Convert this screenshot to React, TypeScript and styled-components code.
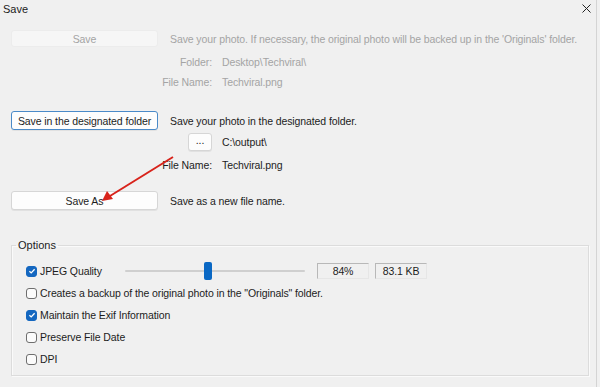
import React from 'react';
import styled, { createGlobalStyle } from 'styled-components';

const GlobalStyle = createGlobalStyle`
  html, body {
    margin: 0;
    padding: 0;
    background: #f0f0f0;
  }
  body {
    font-family: 'Liberation Sans', Arial, sans-serif;
    font-size: 10.5px;
    letter-spacing: -0.1px;
    color: #1c1c1c;
  }
`;

const Window = styled.div`
  position: relative;
  width: 597px;
  height: 387px;
  background: #f0f0f0;
  border-right: 1px solid #d4d4d4;
  box-sizing: border-box;
  overflow: hidden;
`;

const TitleBar = styled.div`
  height: 18px;
  display: flex;
  align-items: center;
  justify-content: space-between;
  padding: 0 5px 0 3px;
  font-size: 11px;
  letter-spacing: 0;
`;

const CloseIcon = styled.svg`
  width: 9px;
  height: 9px;
  margin-top: -1px;
`;

const Content = styled.div`
  padding: 0 8px 0 11px;
`;

const ActionRow = styled.div<{ $top: number }>`
  display: grid;
  grid-template-columns: 147px 1fr;
  column-gap: 12px;
  align-items: center;
  margin-top: ${({ $top }) => $top}px;
`;

const DetailRow = styled.div<{ $top: number; $h: number }>`
  display: grid;
  grid-template-columns: 201px auto;
  column-gap: 10px;
  align-items: center;
  height: ${({ $h }) => $h}px;
  margin-top: ${({ $top }) => $top}px;
  color: ${({ color }) => color || '#1c1c1c'};
`;

const DetailLabel = styled.span`
  justify-self: end;
  white-space: nowrap;
`;

const PushButton = styled.button<{ $variant?: 'disabled' | 'focus' | 'normal' }>`
  height: ${({ $variant }) => ($variant === 'disabled' ? 17 : 19)}px;
  margin: 0;
  padding: 0;
  font-family: inherit;
  font-size: 10.5px;
  letter-spacing: inherit;
  border-radius: 3px;
  text-align: center;
  color: ${({ $variant }) => ($variant === 'disabled' ? '#a4a4a4' : '#1c1c1c')};
  background: ${({ $variant }) => ($variant === 'disabled' ? '#f6f6f6' : '#fdfdfd')};
  border: 1px solid
    ${({ $variant }) =>
      $variant === 'focus' ? '#4a8ac8' : $variant === 'disabled' ? '#ececec' : '#d6d6d6'};
  box-shadow: ${({ $variant }) =>
    $variant === 'disabled' ? 'none' : '0 1px 0 rgba(0,0,0,0.06)'};
`;

const SmallButton = styled(PushButton)`
  width: 24px;
  height: 18px;
  justify-self: end;
  line-height: 10px;
  padding-bottom: 4px;
`;

const Hint = styled.span<{ $muted?: boolean }>`
  color: ${({ $muted }) => ($muted ? '#a4a4a4' : '#1c1c1c')};
  white-space: nowrap;
`;

const Options = styled.fieldset`
  margin: 29px 0 0 0;
  padding: 9px 6px 5px 14px;
  width: 578px;
  height: 137px;
  box-sizing: border-box;
  border: 1px solid #dcdcdc;
  box-shadow: inset 1px 1px 0 #fafafa, 1px 1px 0 #fafafa;
`;

const Legend = styled.legend`
  padding: 0 2px;
  margin-left: -10px;
  font-size: 11px;
  letter-spacing: 0;
  color: #1c1c1c;
`;

const OptionRow = styled.div`
  display: flex;
  align-items: center;
  height: 22px;
`;

const CheckLabel = styled.label<{ $width?: number }>`
  display: flex;
  align-items: center;
  gap: 3px;
  white-space: nowrap;
  width: ${({ $width }) => ($width ? `${$width}px` : 'auto')};
`;

const Box = styled.span<{ $checked: boolean }>`
  width: 11px;
  height: 11px;
  box-sizing: border-box;
  border-radius: 3px;
  display: inline-flex;
  align-items: center;
  justify-content: center;
  background: ${({ $checked }) => ($checked ? '#1467c0' : '#fbfbfb')};
  border: 1px solid ${({ $checked }) => ($checked ? '#1467c0' : '#6e6e6e')};
`;

const SliderTrack = styled.div`
  position: relative;
  width: 180px;
  height: 2px;
  background: #cfcfcf;
  border-radius: 1px;
  margin-right: 12px;
`;

const SliderThumb = styled.div`
  position: absolute;
  top: -8px;
  width: 8px;
  height: 18px;
  border-radius: 2px;
  background: #0a68c4;
  transform: translateX(-50%);
`;

const ValueBox = styled.div`
  width: 52px;
  height: 16px;
  box-sizing: border-box;
  display: flex;
  align-items: center;
  justify-content: center;
  border: 1px solid #b8b8b8;
  border-right-color: #e6e6e6;
  border-bottom-color: #e6e6e6;
  background: #f0f0f0;
  margin-right: 6px;
  font-size: 10.5px;
`;

const Arrow = styled.svg`
  position: absolute;
  left: 0;
  top: 0;
  width: 600px;
  height: 387px;
  pointer-events: none;
`;

const Check = ({ checked, label, width }: { checked: boolean; label: string; width?: number }) => (
  <CheckLabel $width={width}>
    <Box $checked={checked}>
      {checked && (
        <svg width="8" height="8" viewBox="0 0 8 8">
          <path d="M1.4 4.2 L3.2 5.9 L6.6 2.2" fill="none" stroke="#fff" strokeWidth="1.3" />
        </svg>
      )}
    </Box>
    {label}
  </CheckLabel>
);

const quality = 46;

const App = () => (
  <>
    <GlobalStyle />
    <Window>
      <TitleBar>
        <span>Save</span>
        <CloseIcon viewBox="0 0 9 9">
          <path d="M0.5 0.5 L8.5 8.5 M8.5 0.5 L0.5 8.5" stroke="#222" strokeWidth="1" />
        </CloseIcon>
      </TitleBar>
      <Content>
        <ActionRow $top={12}>
          <PushButton $variant="disabled">Save</PushButton>
          <Hint $muted>
            Save your photo. If necessary, the original photo will be backed up in the 'Originals' folder.
          </Hint>
        </ActionRow>
        <DetailRow $top={5} $h={20} color="#a4a4a4">
          <DetailLabel>Folder:</DetailLabel>
          <span>Desktop\Techviral\</span>
        </DetailRow>
        <DetailRow $top={0} $h={20} color="#a4a4a4">
          <DetailLabel>File Name:</DetailLabel>
          <span>Techviral.png</span>
        </DetailRow>

        <ActionRow $top={19}>
          <PushButton $variant="focus">Save in the designated folder</PushButton>
          <Hint>Save your photo in the designated folder.</Hint>
        </ActionRow>
        <DetailRow $top={2} $h={19}>
          <SmallButton>...</SmallButton>
          <span>C:\output\</span>
        </DetailRow>
        <DetailRow $top={4} $h={20}>
          <DetailLabel>File Name:</DetailLabel>
          <span>Techviral.png</span>
        </DetailRow>

        <ActionRow $top={16}>
          <PushButton $variant="normal">Save As</PushButton>
          <Hint>Save as a new file name.</Hint>
        </ActionRow>

        <Options>
          <Legend>Options</Legend>
          <OptionRow>
            <Check checked label="JPEG Quality" width={99} />
            <SliderTrack>
              <SliderThumb style={{ left: `${quality}%` }} />
            </SliderTrack>
            <ValueBox>84%</ValueBox>
            <ValueBox>83.1 KB</ValueBox>
          </OptionRow>
          <OptionRow>
            <Check checked={false} label={'Creates a backup of the original photo in the "Originals" folder.'} />
          </OptionRow>
          <OptionRow>
            <Check checked label="Maintain the Exif Information" />
          </OptionRow>
          <OptionRow>
            <Check checked={false} label="Preserve File Date" />
          </OptionRow>
          <OptionRow>
            <Check checked={false} label="DPI" />
          </OptionRow>
        </Options>
      </Content>
      <Arrow viewBox="0 0 600 387">
        <line x1="173" y1="157" x2="110" y2="196" stroke="#d8231b" strokeWidth="2" />
        <polygon points="102,201 107,191 113,199" fill="#d8231b" />
      </Arrow>
    </Window>
  </>
);

export default App;
